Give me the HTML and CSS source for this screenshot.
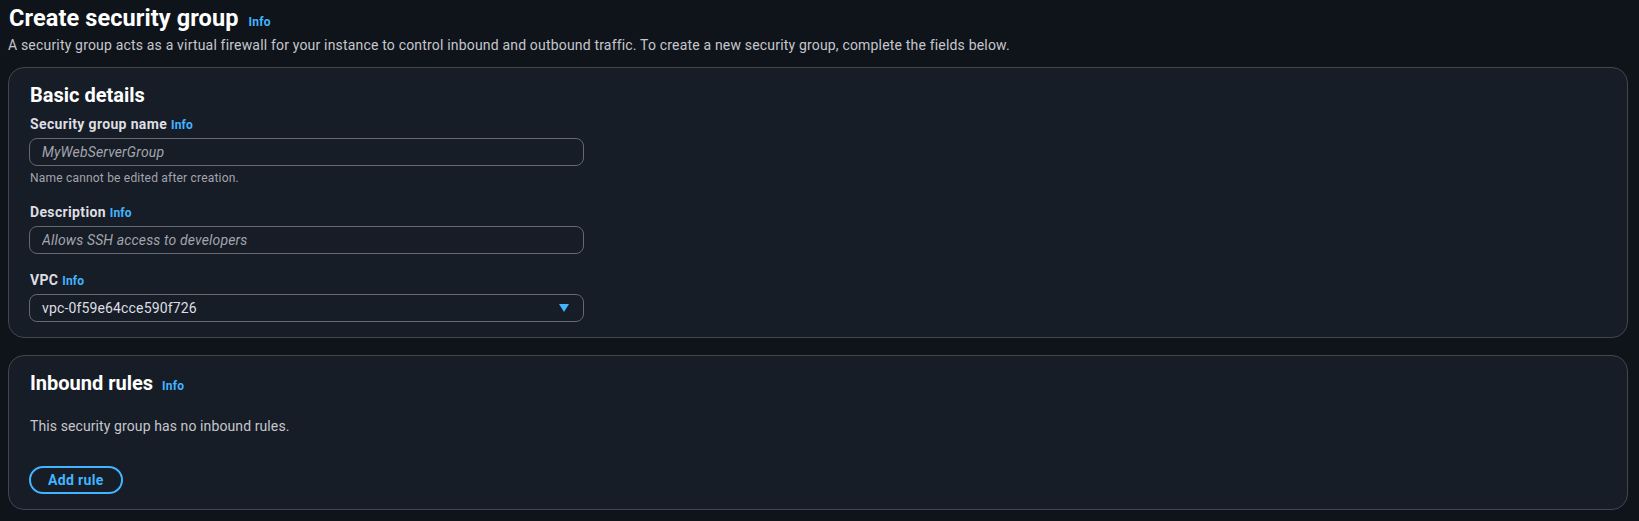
FILE: index.html
```html
<!DOCTYPE html>
<html lang="en">
<head>
<meta charset="utf-8">
<title>Create security group</title>
<link rel="stylesheet" href="styles.css">
</head>
<body>
<div class="page">
  <header class="page-header">
    <h1 class="title">Create security group <a class="info info-title" href="#">Info</a></h1>
    <p class="subtitle">A security group acts as a virtual firewall for your instance to control inbound and outbound traffic. To create a new security group, complete the fields below.</p>
  </header>

  <section class="panel">
    <h2 class="panel-title">Basic details</h2>
    <div class="field">
      <label class="label" for="sg-name">Security group name <a class="info" href="#">Info</a></label>
      <input class="input" id="sg-name" type="text" placeholder="MyWebServerGroup">
      <div class="hint">Name cannot be edited after creation.</div>
    </div>
    <div class="field">
      <label class="label" for="sg-desc">Description <a class="info" href="#">Info</a></label>
      <input class="input" id="sg-desc" type="text" placeholder="Allows SSH access to developers">
    </div>
    <div class="field">
      <label class="label">VPC <a class="info" href="#">Info</a></label>
      <div class="select">
        <span class="select-value">vpc-0f59e64cce590f726</span>
        <svg class="caret" width="10" height="8" viewBox="0 0 10 8" aria-hidden="true"><polygon points="0,0 10,0 5,8" fill="#42b4ff"/></svg>
      </div>
    </div>
  </section>

  <section class="panel">
    <h2 class="panel-title">Inbound rules <a class="info info-heading" href="#">Info</a></h2>
    <p class="empty">This security group has no inbound rules.</p>
    <button class="btn" type="button">Add rule</button>
  </section>
</div>
</body>
</html>
```

FILE: styles.css
```css
* { box-sizing: border-box; }

html, body {
  margin: 0;
  padding: 0;
  background: #0f141a;
}

body {
  font-family: Roboto, "Liberation Sans", sans-serif;
  color: #c6c6cd;
  font-size: 14px;
  line-height: 20px;
}

.page {
  padding: 4px 11px 0 8px;
  display: flex;
  flex-direction: column;
}

.page-header {
  display: flex;
  flex-direction: column;
  gap: 3px;
}

.title {
  margin: 0;
  font-size: 23.5px;
  line-height: 28px;
  font-weight: 700;
  color: #ffffff;
  padding-left: 1px;
  letter-spacing: 0.1px;
}

.subtitle {
  margin: 0;
  font-size: 14px;
  line-height: 20px;
  color: #c6c6cd;
  letter-spacing: 0.18px;
}

.info {
  color: #42b4ff;
  font-size: 12px;
  line-height: 1;
  font-weight: 700;
  text-decoration: none;
  letter-spacing: 0.2px;
}

.info-title {
  margin-left: 4px;
}

.info-heading {
  margin-left: 4px;
}

.panel {
  margin-top: 12px;
  background: #161d26;
  border: 1px solid #424650;
  border-radius: 16px;
  padding: 15px 20px 15px 20px;
  display: flex;
  flex-direction: column;
  align-items: flex-start;
}

.panel + .panel {
  margin-top: 17px;
}

.panel-title {
  margin: 0;
  font-size: 20px;
  line-height: 24px;
  font-weight: 700;
  color: #ffffff;
  padding-left: 1px;
}

.field {
  display: flex;
  flex-direction: column;
  margin-top: 16px;
}

.panel-title + .field {
  margin-top: 7px;
}

.label {
  font-size: 14px;
  line-height: 20px;
  font-weight: 700;
  color: #dedee3;
  letter-spacing: 0.35px;
  margin-bottom: 4px;
  padding-left: 1px;
}

.label .info {
  letter-spacing: 0.2px;
}

.input,
.select {
  width: 555px;
  height: 28px;
  border: 1px solid #656871;
  border-radius: 8px;
  background: #161d26;
  font-family: Roboto, "Liberation Sans", sans-serif;
  font-size: 14px;
  line-height: 20px;
  color: #c6c6cd;
  padding: 3px 12px;
  margin: 0;
  letter-spacing: 0.15px;
}

.input::placeholder {
  color: #a4a4ad;
  font-style: italic;
  opacity: 1;
}

.select {
  display: flex;
  align-items: center;
  justify-content: space-between;
  padding: 3px 14px 3px 12px;
}

.select-value {
  color: #dedee3;
  letter-spacing: 0.15px;
}

.caret {
  display: block;
}

.hint {
  margin-top: 4px;
  font-size: 12px;
  line-height: 16px;
  color: #a4a4ad;
  padding-left: 1px;
  letter-spacing: 0.2px;
}

.empty {
  margin: 21px 0 0 0;
  font-size: 14px;
  line-height: 20px;
  color: #c6c6cd;
  padding-left: 1px;
  letter-spacing: 0.1px;
}

.btn {
  margin-top: 30px;
  height: 28px;
  padding: 0 17px;
  border: 2px solid #42b4ff;
  border-radius: 20px;
  background: transparent;
  color: #42b4ff;
  font-family: Roboto, "Liberation Sans", sans-serif;
  font-size: 14px;
  line-height: 20px;
  font-weight: 700;
  letter-spacing: 0.35px;
  cursor: pointer;
}
```
